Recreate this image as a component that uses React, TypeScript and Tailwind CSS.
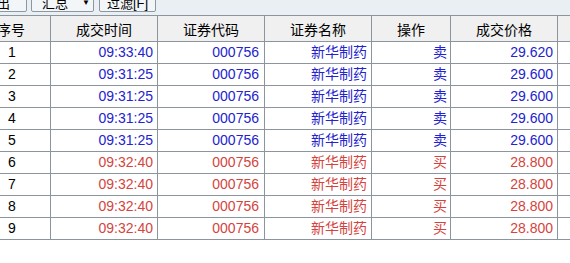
import React from 'react';

type Trade = {
  no: number;
  time: string;
  code: string;
  name: string;
  side: '买' | '卖';
  price: string;
};

const trades: Trade[] = [
  { no: 1, time: '09:33:40', code: '000756', name: '新华制药', side: '卖', price: '29.620' },
  { no: 2, time: '09:31:25', code: '000756', name: '新华制药', side: '卖', price: '29.600' },
  { no: 3, time: '09:31:25', code: '000756', name: '新华制药', side: '卖', price: '29.600' },
  { no: 4, time: '09:31:25', code: '000756', name: '新华制药', side: '卖', price: '29.600' },
  { no: 5, time: '09:31:25', code: '000756', name: '新华制药', side: '卖', price: '29.600' },
  { no: 6, time: '09:32:40', code: '000756', name: '新华制药', side: '买', price: '28.800' },
  { no: 7, time: '09:32:40', code: '000756', name: '新华制药', side: '买', price: '28.800' },
  { no: 8, time: '09:32:40', code: '000756', name: '新华制药', side: '买', price: '28.800' },
  { no: 9, time: '09:32:40', code: '000756', name: '新华制药', side: '买', price: '28.800' },
];

const font = { fontFamily: '"Liberation Sans", "Noto Sans CJK SC", sans-serif' };

export default function App() {
  return (
    <div className="w-[570px] h-[263px] overflow-hidden bg-white text-[14px] text-black" style={font}>
      {/* Toolbar */}
      <div className="h-[15px] bg-[#e9eff3] flex items-start gap-[4px] overflow-hidden">
        <button className="-ml-[30px] w-[57px] h-[24px] -mt-[12px] flex items-end justify-end pr-[16px] border border-[#8e979f] bg-[#f3f6f8] text-[13px] leading-[14px] rounded-[2px]">
          导出
        </button>
        <button className="w-[63px] h-[24px] -mt-[12px] flex items-end pl-[10px] border border-[#8e979f] bg-[#f3f6f8] text-[13px] leading-[14px] rounded-[2px]">
          <span>汇总</span>
          <span className="self-start mt-[10px] ml-[14px] text-[8px] leading-[8px]">▼</span>
        </button>
        <button className="ml-[1px] w-[57px] h-[24px] -mt-[12px] flex items-end justify-center border border-[#8e979f] bg-[#f3f6f8] text-[13px] leading-[14px] rounded-[2px]">
          过滤[F]
        </button>
      </div>

      {/* Header */}
      <div className="flex h-[27px] border-y border-[#8c959e] bg-[#f0f0f0] w-[600px]">
        <div className="w-[51px] border-r border-[#8c959e] flex items-center pt-[3px]">
          <span className="-ml-[3px]">序号</span>
        </div>
        <div className="w-[107px] border-r border-[#8c959e] flex items-center justify-center pt-[3px]">成交时间</div>
        <div className="w-[107px] border-r border-[#8c959e] flex items-center justify-center pt-[3px]">证券代码</div>
        <div className="w-[107px] border-r border-[#8c959e] flex items-center justify-center pt-[3px]">证券名称</div>
        <div className="w-[79px] border-r border-[#8c959e] flex items-center justify-center pt-[3px]">操作</div>
        <div className="w-[107px] border-r border-[#8c959e] flex items-center justify-center pt-[3px]">成交价格</div>
        <div className="flex-1" />
      </div>

      {/* Rows */}
      {trades.map((t) => {
        const color = t.side === '卖' ? 'text-[#2323cf]' : 'text-[#d4443e]';
        return (
          <div key={t.no} className="flex h-[22px] border-b border-[#8c959e] w-[600px]">
            <div className="w-[51px] border-r border-[#8c959e] flex items-center pl-[8px]">{t.no}</div>
            <div className={`w-[107px] border-r border-[#8c959e] flex items-center justify-end pr-[4px] ${color}`}>{t.time}</div>
            <div className={`w-[107px] border-r border-[#8c959e] flex items-center justify-end pr-[5px] ${color}`}>{t.code}</div>
            <div className={`w-[107px] border-r border-[#8c959e] flex items-center justify-end pr-[4px] ${color}`}>{t.name}</div>
            <div className={`w-[79px] border-r border-[#8c959e] flex items-center justify-end pr-[3px] ${color}`}>{t.side}</div>
            <div className={`w-[107px] border-r border-[#8c959e] flex items-center justify-end pr-[4px] ${color}`}>{t.price}</div>
            <div className="flex-1" />
          </div>
        );
      })}
    </div>
  );
}
